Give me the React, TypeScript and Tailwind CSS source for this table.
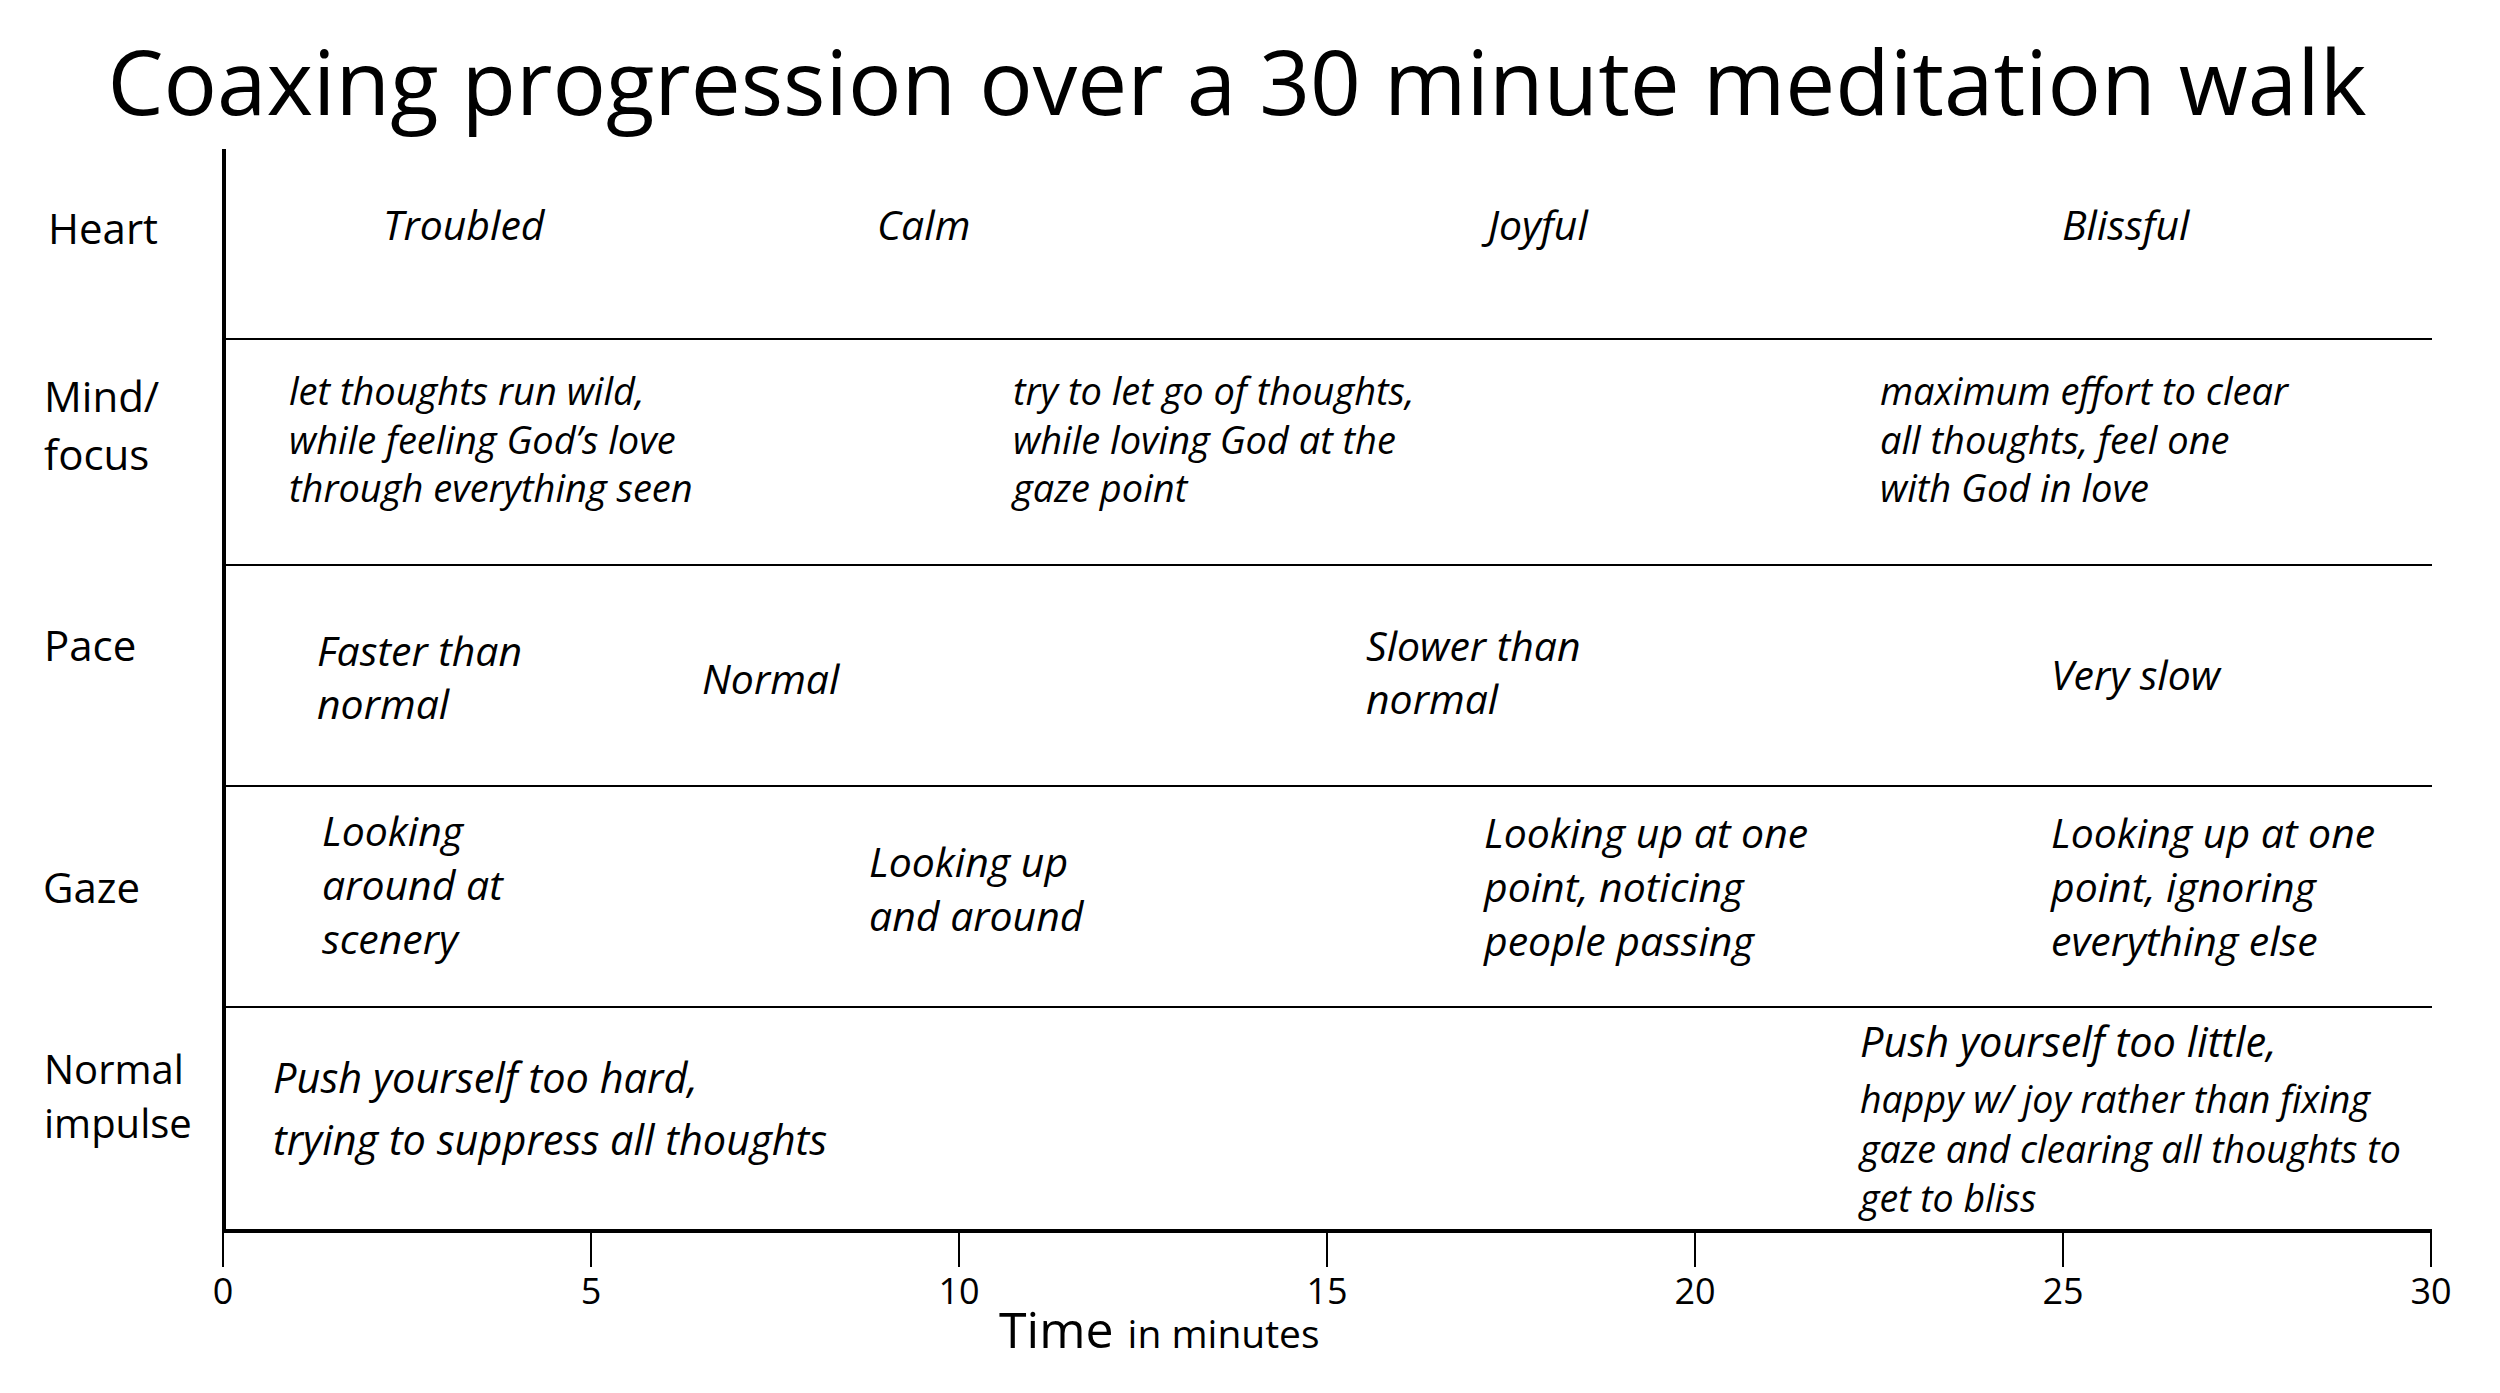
import React from 'react';

type Cell = { lines: string[]; box: string };

type Row = {
  label: string[];
  labelBox: string;
  height: string;
  content: string;
  text: string;
  cells: Cell[];
};

const rows: Row[] = [
  {
    label: ['Heart'],
    labelBox: 'pl-[48px] pt-[51px] leading-[56px]',
    height: 'h-[191px]',
    content: 'pl-[157px] border-b-2',
    text: 'text-[41px] leading-[56px]',
    cells: [
      { lines: ['Troubled'], box: 'w-[494px] pt-[47px]' },
      { lines: ['Calm'], box: 'w-[611px] pt-[47px]' },
      { lines: ['Joyful'], box: 'w-[574px] pt-[47px]' },
      { lines: ['Blissful'], box: 'pt-[47px]' },
    ],
  },
  {
    label: ['Mind/', 'focus'],
    labelBox: 'pl-[44px] pt-[27px] leading-[58px]',
    height: 'h-[226px]',
    content: 'pl-[63px] border-b-2',
    text: 'text-[38px] leading-[48.5px]',
    cells: [
      {
        lines: ['let thoughts run wild,', 'while feeling God’s love', 'through everything seen'],
        box: 'w-[724px] pt-[26px]',
      },
      {
        lines: ['try to let go of thoughts,', 'while loving God at the', 'gaze point'],
        box: 'w-[867px] pt-[26px]',
      },
      {
        lines: ['maximum effort to clear', 'all thoughts, feel one', 'with God in love'],
        box: 'pt-[26px]',
      },
    ],
  },
  {
    label: ['Pace'],
    labelBox: 'pl-[44px] pt-[51px] leading-[56px]',
    height: 'h-[221px]',
    content: 'pl-[91px] border-b-2',
    text: 'text-[41px] leading-[53px]',
    cells: [
      { lines: ['Faster than', 'normal'], box: 'w-[385px] pt-[58px]' },
      { lines: ['Normal'], box: 'w-[664px] pt-[86px]' },
      { lines: ['Slower than', 'normal'], box: 'w-[685px] pt-[53px]' },
      { lines: ['Very slow'], box: 'pt-[82px]' },
    ],
  },
  {
    label: ['Gaze'],
    labelBox: 'pl-[43px] pt-[72px] leading-[56px]',
    height: 'h-[221px]',
    content: 'pl-[96px] border-b-2',
    text: 'text-[41px] leading-[54px]',
    cells: [
      { lines: ['Looking', 'around at', 'scenery'], box: 'w-[547px] pt-[16px]' },
      { lines: ['Looking up', 'and around'], box: 'w-[615px] pt-[47px]' },
      { lines: ['Looking up at one', 'point, noticing', 'people passing'], box: 'w-[567px] pt-[18px]' },
      { lines: ['Looking up at one', 'point, ignoring', 'everything else'], box: 'pt-[18px]' },
    ],
  },
];

const ticks = [0, 5, 10, 15, 20, 25, 30];

const Lines: React.FC<{ lines: string[] }> = ({ lines }) => (
  <>
    {lines.map((line) => (
      <div key={line} className="whitespace-nowrap">
        {line}
      </div>
    ))}
  </>
);

const App: React.FC = () => {
  return (
    <div className="w-[2500px] h-[1393px] overflow-hidden bg-white text-black font-['Open_Sans',sans-serif]">
      <h1 className="pt-[21px] w-[2474px] text-center text-[89px] leading-[120px] font-normal whitespace-nowrap">
        Coaxing progression over a 30 minute meditation walk
      </h1>

      <div className="mt-[8px] flex flex-col">
        {rows.map((row) => (
          <div key={row.label.join('')} className={`flex ${row.height}`}>
            <div className={`w-[222px] shrink-0 text-[42px] ${row.labelBox}`}>
              <Lines lines={row.label} />
            </div>
            <div className={`w-[2210px] flex items-start border-l-4 border-black ${row.content}`}>
              {row.cells.map((cell) => (
                <div key={cell.lines[0]} className={`shrink-0 italic ${row.text} ${cell.box}`}>
                  <Lines lines={cell.lines} />
                </div>
              ))}
            </div>
          </div>
        ))}

        {/* last row sits on the time axis */}
        <div className="flex h-[225px]">
          <div className="w-[222px] shrink-0 pl-[44px] pt-[34px] text-[40px] leading-[54px]">
            <div>Normal</div>
            <div>impulse</div>
          </div>
          <div className="w-[2210px] flex items-start border-l-4 border-b-4 border-black pl-[47px] italic">
            <div className="w-[1587px] shrink-0 pt-[38px] text-[41.5px] leading-[62px]">
              <div className="whitespace-nowrap">Push yourself too hard,</div>
              <div className="whitespace-nowrap">trying to suppress all thoughts</div>
            </div>
            <div className="pt-[5px]">
              <div className="whitespace-nowrap text-[41.5px] leading-[56px]">Push yourself too little,</div>
              <div className="mt-[5px] text-[37.5px] leading-[49.5px]">
                <div className="whitespace-nowrap">happy w/ joy rather than fixing</div>
                <div className="whitespace-nowrap">gaze and clearing all thoughts to</div>
                <div className="whitespace-nowrap">get to bliss</div>
              </div>
            </div>
          </div>
        </div>
      </div>

      <div className="ml-[222px] w-[2210px] flex justify-between">
        {ticks.map((t) => (
          <div key={t} className="w-[2px] flex flex-col items-center">
            <div className="w-[2px] h-[34px] bg-black" />
            <div className="mt-[9px] text-[36px] leading-[29px] whitespace-nowrap">{t}</div>
          </div>
        ))}
      </div>

      <div className="ml-[999px] -mt-[1px] flex items-baseline whitespace-nowrap">
        <span className="text-[50px] leading-none">Time</span>
        <span className="ml-[14px] text-[39px] leading-none">in minutes</span>
      </div>
    </div>
  );
};

export default App;
